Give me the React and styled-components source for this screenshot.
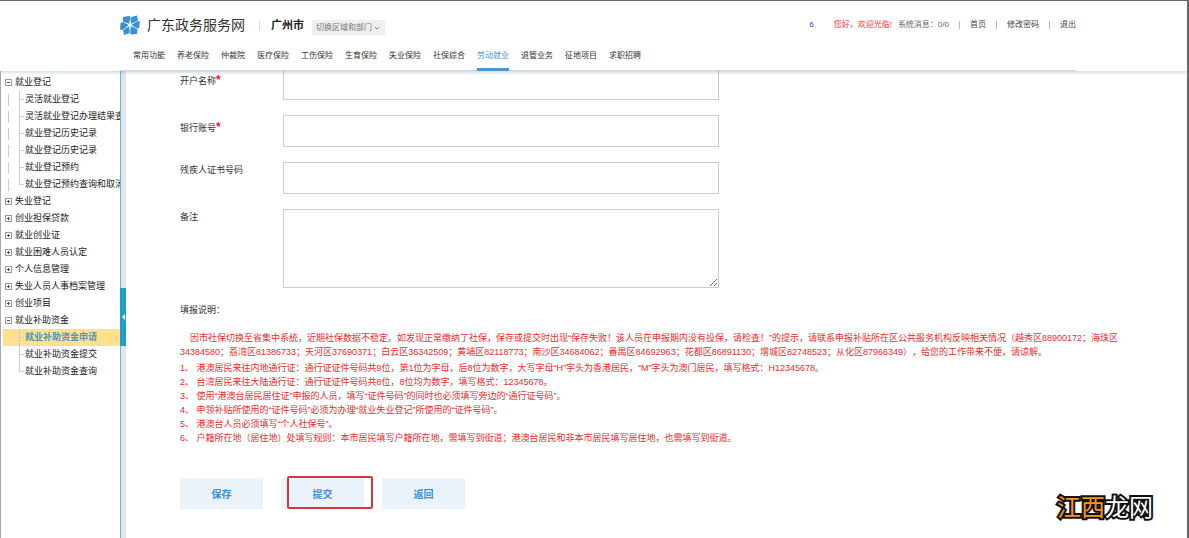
import React, { useState } from 'react'
import styled, { createGlobalStyle, css } from 'styled-components'

const GlobalStyle = createGlobalStyle`
  * {
    box-sizing: border-box;
  }
  body {
    margin: 0;
    background: #fff;
    color: #333;
    font-family: 'Liberation Sans', 'Noto Sans CJK SC', sans-serif;
    font-size: 9px;
    text-spacing-trim: space-all;
  }
  a {
    color: inherit;
    text-decoration: none;
  }
  ul {
    list-style: none;
    margin: 0;
    padding: 0;
  }
  button,
  input,
  select,
  textarea {
    font-family: inherit;
  }
`

const Page = styled.div`
  position: relative;
  display: flex;
  flex-direction: column;
  min-height: 100vh;
  border: solid #666;
  border-width: 1px 2px 0 0;
  overflow: hidden;
`

const Header = styled.header`
  position: relative;
  z-index: 1;
  padding: 0 111px 0 120px;
  background: #fff;
  box-shadow: 0 1px 4px rgba(90, 130, 150, 0.4);
`

const TopBar = styled.div`
  display: flex;
  align-items: center;
  height: 48px;
`

const LogoIcon = styled.svg`
  width: 20px;
  height: 20px;
  margin-right: 7px;
`

const SiteName = styled.h1`
  margin: 0;
  font-size: 14px;
  font-weight: 400;
  line-height: 20px;
`

const City = styled.strong`
  margin: 0 8px 0 14px;
  padding-left: 12px;
  background: linear-gradient(#ddd, #ddd) left center / 1px 10px no-repeat;
  color: #222;
  font-size: 11px;
  line-height: 16px;
`

const AreaPicker = styled.label`
  position: relative;
  display: flex;
  margin-top: 4px;
  svg {
    position: absolute;
    top: 5px;
    right: 5px;
    width: 6px;
    height: 6px;
    pointer-events: none;
  }
`

const AreaSelect = styled.select`
  appearance: none;
  width: 73px;
  height: 15px;
  padding: 0 4px;
  border: 0;
  border-radius: 0;
  background: #efefef;
  color: #777;
  font-size: 8px;
`

const UserBar = styled.div`
  display: flex;
  align-items: center;
  margin-left: auto;
  color: #666;
  font-size: 8px;
  line-height: 12px;
`

const UserName = styled.span`
  margin-right: 20px;
  color: #3b3bdc;
`

const Welcome = styled.span`
  margin-right: 6px;
  color: #f33;
`

const UserLink = styled.a`
  margin-left: 10px;
  padding-left: 11px;
  background: linear-gradient(#bbb, #bbb) left center / 1px 8px no-repeat;
  color: #444;
`

const Nav = styled.nav`
  display: flex;
  gap: 12px;
  padding-left: 13px;
  border-bottom: 1px solid #cfdadd;
`

const NavLink = styled.a`
  margin-bottom: -1px;
  padding-bottom: 5px;
  border-bottom: 3px solid ${({ $active }) => ($active ? '#4a94d0' : 'transparent')};
  color: ${({ $active }) => ($active ? '#4a94d0' : '#333')};
  font-size: 8px;
  line-height: 14px;
  white-space: nowrap;
`

const Body = styled.div`
  display: flex;
  flex: 1;
`

const Sidebar = styled.aside`
  flex: none;
  width: 120px;
  padding-top: 3px;
  border-left: 1px solid #aaa;
  overflow: hidden;
`

const TreeRow = styled.div`
  display: flex;
  align-items: center;
  height: 17px;
  padding-left: 4px;
`

const Toggle = styled.button`
  flex: none;
  width: 7px;
  height: 7px;
  margin-right: 3px;
  padding: 0;
  border: 1px solid #999;
  background:
    linear-gradient(#555, #555) center / 3px 1px no-repeat,
    ${({ $open }) => ($open ? 'none' : 'linear-gradient(#555, #555) center / 1px 3px no-repeat')};
`

const TreeTitle = styled.span`
  color: #222;
  font-size: 9px;
  line-height: 17px;
  white-space: nowrap;
`

const Branch = styled.ul`
  margin-left: 2px;
  padding-left: 16px;
  ${({ $guide }) =>
    $guide &&
    css`
      background: repeating-linear-gradient(#ccc 0 12px, transparent 12px 17px) 5px 3px / 1px 100% no-repeat;
    `}
`

const Leaf = styled.li`
  display: flex;
  height: 17px;
  ${({ $active }) =>
    $active &&
    css`
      margin-left: -16px;
      padding-left: 16px;
      background: #ffe08c;
    `}
  &::before {
    content: '';
    flex: none;
    width: 5px;
    margin-right: 1px;
    background:
      linear-gradient(#ccc, #ccc) left top / 1px 100% no-repeat,
      linear-gradient(#ccc, #ccc) left center / 5px 1px no-repeat;
  }
  &:last-child::before {
    background:
      linear-gradient(#ccc, #ccc) left top / 1px 50% no-repeat,
      linear-gradient(#ccc, #ccc) left center / 5px 1px no-repeat;
  }
`

const LeafLink = styled.a`
  color: ${({ $active }) => ($active ? '#4f97bd' : '#222')};
  font-size: 9px;
  font-weight: ${({ $active }) => ($active ? 700 : 400)};
  line-height: 17px;
  white-space: nowrap;
`

const Splitter = styled.div`
  flex: none;
  width: 6px;
  padding-top: 217px;
  border-left: 1px solid #5cbcd6;
  background: #e2e5ee;
`

const Collapse = styled.button`
  display: flex;
  align-items: center;
  justify-content: center;
  width: 6px;
  height: 58px;
  margin-left: -1px;
  padding: 0;
  border: 0;
  background: #1f9fc4;
  svg {
    width: 3px;
    height: 6px;
  }
`

const Main = styled.main`
  flex: 1;
  min-width: 0;
  padding: 0 54px 28px;
`

/* the form is scrolled slightly under the header */
const Form = styled.form`
  margin-top: -3px;
`

const Fields = styled.div`
  display: flex;
  flex-direction: column;
  gap: 15px;
`

const Field = styled.div`
  display: flex;
  align-items: flex-start;
`

const FieldLabel = styled.label`
  flex: none;
  width: 103px;
  padding-top: ${({ $required }) => ($required ? 5 : 0)}px;
  font-size: 9px;
  line-height: 16px;
`

const Star = styled.span`
  color: #d9232e;
  font-size: 12px;
  font-weight: 700;
  line-height: 12px;
`

const control = css`
  flex: 0 1 436px;
  min-width: 0;
  border: 1px solid #ccc;
  border-radius: 0;
  background: #fff;
  font-size: 9px;
`

const Input = styled.input`
  ${control}
  height: 32px;
`

const Textarea = styled.textarea`
  ${control}
  height: 79px;
`

const NotesTitle = styled.h2`
  margin: 15px 0 14px;
  font-size: 9px;
  font-weight: 400;
  line-height: 14px;
`

const Notes = styled.div`
  color: #f02b2b;
  font-size: 9px;
  line-height: 14px;
`

const Intro = styled.p`
  margin: 0 0 2px;
  text-indent: 10px;
`

const Note = styled.p`
  margin: 0;
`

const Actions = styled.div`
  display: flex;
  gap: 18px;
  margin-top: 33px;
`

const ActionButton = styled.button`
  position: relative;
  width: 83px;
  height: 31px;
  padding: 0;
  border: 0;
  background: #eaf3fa;
  color: #3f8fd2;
  font-size: 10px;
  font-weight: 700;
`

const Highlight = styled.span`
  position: absolute;
  top: -2px;
  left: 6px;
  width: 86px;
  height: 33px;
  border: 2px solid #d93636;
  border-radius: 2px;
`

const Watermark = styled.div`
  position: absolute;
  right: 34px;
  bottom: 14px;
  color: #fff;
  font-family: 'Noto Sans CJK SC', sans-serif;
  font-size: 24px;
  font-weight: 400;
  line-height: 36px;
  -webkit-text-stroke: 4px #111;
  paint-order: stroke fill;
  span {
    color: #f7941d;
  }
`

const navItems = [
  '常用功能',
  '养老保险',
  '仲裁院',
  '医疗保险',
  '工伤保险',
  '生育保险',
  '失业保险',
  '社保综合',
  '劳动就业',
  '退管业务',
  '征地项目',
  '求职招聘',
]

const tree = [
  {
    title: '就业登记',
    children: [
      '灵活就业登记',
      '灵活就业登记办理结果查询',
      '就业登记历史记录',
      '就业登记历史记录',
      '就业登记预约',
      '就业登记预约查询和取消',
    ],
  },
  { title: '失业登记' },
  { title: '创业担保贷款' },
  { title: '就业创业证' },
  { title: '就业困难人员认定' },
  { title: '个人信息管理' },
  { title: '失业人员人事档案管理' },
  { title: '创业项目' },
  { title: '就业补助资金', children: ['就业补助资金申请', '就业补助资金提交', '就业补助资金查询'] },
]

const notes = [
  '港澳居民来往内地通行证：通行证证件号码共9位，第1位为字母，后8位为数字，大写字母“H”字头为香港居民，“M”字头为澳门居民，填写格式：H12345678。',
  '台湾居民来往大陆通行证：通行证证件号码共8位，8位均为数字，填写格式：12345678。',
  '使用“港澳台居民居住证”申报的人员，填写“证件号码”的同时也必须填写旁边的“通行证号码”。',
  '申领补贴所使用的“证件号码”必须为办理“就业失业登记”所使用的“证件号码”。',
  '港澳台人员必须填写“个人社保号”。',
  '户籍所在地（居住地）处填写规则：本市居民填写户籍所在地，需填写到街道；港澳台居民和非本市居民填写居住地，也需填写到街道。',
]

const Logo = () => (
  <LogoIcon viewBox="0 0 20 20" aria-hidden="true">
    <path
      fill="#3990d6"
      d="M3 2 9 1l2 1 6-1.500L18 6l2 1-1 6-1.500 1-.5 5-6 .5-1-1.500L4 20l-1-5-3-.5L.500 8 3 7z"
    />
    <path
      stroke="#fff"
      strokeWidth="0.700"
      d="M10 10 11 2M10 10l7.500-4M10 10l8 4M10 10v8M10 10l-7 5M10 10 3 7"
    />
    <path stroke="#fff" strokeWidth="1" d="M10 6v8M6.500 8l7 4M6.500 12l7-4" />
    <circle cx="10" cy="10" r="1.500" fill="#fff" />
  </LogoIcon>
)

const TreeGroup = ({ title, children, guide }) => {
  const [open, setOpen] = useState(!!children)
  return (
    <li>
      <TreeRow>
        <Toggle type="button" aria-label={title} aria-expanded={open} $open={open} onClick={() => setOpen(!open)} />
        <TreeTitle>{title}</TreeTitle>
      </TreeRow>
      {open && children && (
        <Branch $guide={guide}>
          {children.map((name, i) => {
            const active = name === '就业补助资金申请'
            return (
              <Leaf key={i} $active={active}>
                <LeafLink href="#" $active={active}>
                  {name}
                </LeafLink>
              </Leaf>
            )
          })}
        </Branch>
      )}
    </li>
  )
}

export default function App() {
  return (
    <Page>
      <GlobalStyle />
      <Header>
        <TopBar>
          <Logo />
          <SiteName>广东政务服务网</SiteName>
          <City>广州市</City>
          <AreaPicker>
            <AreaSelect aria-label="切换区域和部门">
              <option>切换区域和部门</option>
            </AreaSelect>
            <svg viewBox="0 0 6 6" fill="none" stroke="#888">
              <path d="M1 2l2 2 2-2" />
            </svg>
          </AreaPicker>
          <UserBar>
            <UserName>6</UserName>
            <Welcome>您好，欢迎光临!</Welcome>
            <span>系统消息：0/0</span>
            <UserLink href="#">首页</UserLink>
            <UserLink href="#">修改密码</UserLink>
            <UserLink href="#">退出</UserLink>
          </UserBar>
        </TopBar>
        <Nav>
          {navItems.map((item) => (
            <NavLink key={item} href="#" $active={item === '劳动就业'}>
              {item}
            </NavLink>
          ))}
        </Nav>
      </Header>
      <Body>
        <Sidebar>
          <ul>
            {tree.map((group, i) => (
              <TreeGroup key={group.title} title={group.title} guide={i < tree.length - 1}>
                {group.children}
              </TreeGroup>
            ))}
          </ul>
        </Sidebar>
        <Splitter>
          <Collapse type="button" aria-label="收起">
            <svg viewBox="0 0 3 6" fill="#fff">
              <path d="M3 0v6L0 3z" />
            </svg>
          </Collapse>
        </Splitter>
        <Main>
          <Form onSubmit={(e) => e.preventDefault()}>
            <Fields>
              <Field>
                <FieldLabel htmlFor="account-name" $required>
                  开户名称<Star>*</Star>
                </FieldLabel>
                <Input id="account-name" />
              </Field>
              <Field>
                <FieldLabel htmlFor="account-no" $required>
                  银行账号<Star>*</Star>
                </FieldLabel>
                <Input id="account-no" />
              </Field>
              <Field>
                <FieldLabel htmlFor="disability-no">残疾人证书号码</FieldLabel>
                <Input id="disability-no" />
              </Field>
              <Field>
                <FieldLabel htmlFor="remark">备注</FieldLabel>
                <Textarea id="remark" />
              </Field>
            </Fields>
            <NotesTitle>填报说明：</NotesTitle>
            <Notes>
              <Intro>
                因市社保切换至省集中系统，近期社保数据不稳定。如发现正常缴纳了社保，保存或提交时出现“保存失败！该人员在申报期内没有投保，请检查！”的提示，请联系申报补贴所在区公共服务机构反映相关情况（越秀区88900172；海珠区34384580；荔湾区81386733；天河区37690371；白云区36342509；黄埔区82118773；南沙区34684062；番禺区84692963；花都区86891130；增城区82748523；从化区87966349），给您的工作带来不便，请谅解。
              </Intro>
              {notes.map((note, i) => (
                <Note key={i}>
                  {i + 1}、 {note}
                </Note>
              ))}
            </Notes>
            <Actions>
              <ActionButton type="button">保存</ActionButton>
              <ActionButton type="submit">
                提交
                <Highlight />
              </ActionButton>
              <ActionButton type="button">返回</ActionButton>
            </Actions>
          </Form>
        </Main>
      </Body>
      <Watermark>
        <span>江西</span>龙网
      </Watermark>
    </Page>
  )
}
